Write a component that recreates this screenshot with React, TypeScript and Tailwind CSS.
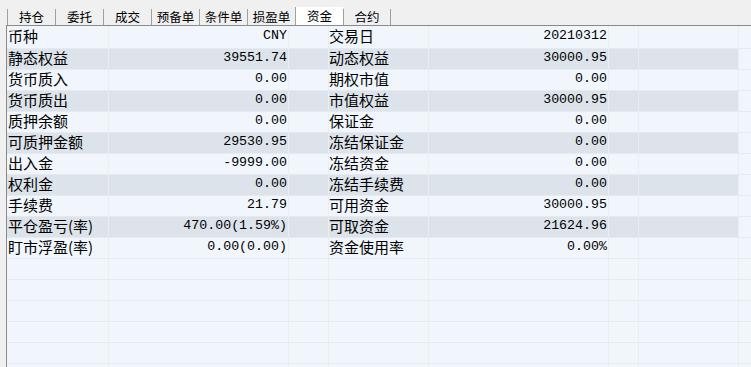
import React from "react";

const tabs = ["持仓", "委托", "成交", "预备单", "条件单", "损盈单", "资金", "合约"];

const rows: [string, string, string, string][] = [
  ["币种", "CNY", "交易日", "20210312"],
  ["静态权益", "39551.74", "动态权益", "30000.95"],
  ["货币质入", "0.00", "期权市值", "0.00"],
  ["货币质出", "0.00", "市值权益", "30000.95"],
  ["质押余额", "0.00", "保证金", "0.00"],
  ["可质押金额", "29530.95", "冻结保证金", "0.00"],
  ["出入金", "-9999.00", "冻结资金", "0.00"],
  ["权利金", "0.00", "冻结手续费", "0.00"],
  ["手续费", "21.79", "可用资金", "30000.95"],
  ["平仓盈亏(率)", "470.00(1.59%)", "可取资金", "21624.96"],
  ["盯市浮盈(率)", "0.00(0.00)", "资金使用率", "0.00%"],
  ["", "", "", ""],
  ["", "", "", ""],
  ["", "", "", ""],
  ["", "", "", ""],
  ["", "", "", ""],
  ["", "", "", ""],
];

const cjk = "font-['Noto_Sans_CJK_SC','Noto_Sans',sans-serif]";
const mono = "font-['Liberation_Mono','Noto_Sans_CJK_SC',monospace]";

export default function App() {
  return (
    <div className={`w-[751px] h-[367px] overflow-hidden bg-[#f0f0f0] ${cjk} text-black`}>
      {/* 标签栏 */}
      <div className="h-[25px] flex items-end pl-[7px]">
        {tabs.map((t) => {
          const active = t === "资金";
          return (
            <div
              key={t}
              className={`w-[48px] flex items-center justify-center text-[12.5px] leading-none border-l border-[#a0a0a0] last:border-r ${
                active ? "h-[18px] bg-white" : "h-[16px]"
              }`}
            >
              {t}
            </div>
          );
        })}
      </div>

      {/* 资金表格 */}
      <div className="ml-[6px] border-l border-t border-[#8a8a8a]">
        {rows.map((r, i) => {
          const dark = i % 2 === 1 && i < 11;
          const bg = dark ? "bg-[#dce3ea]" : "bg-[#f0f6fc]";
          return (
            <div
              key={i}
              className={`flex border-b border-[#e6e9ed] text-[15px] leading-none ${i === 0 ? "h-[23px]" : "h-[21px]"}`}
            >
              <div className={`w-[102px] shrink-0 flex items-center pl-[1px] pb-[4px] border-r border-[#eaeef2] ${bg}`}>
                {r[0]}
              </div>
              <div className={`w-[180px] shrink-0 flex items-center justify-end pr-[1px] pb-[3px] border-r border-[#eaeef2] ${mono} text-[13.3px] ${bg}`}>
                {r[1]}
              </div>
              <div className={`w-[40px] shrink-0 border-r border-[#eaeef2] ${bg}`} />
              <div className={`w-[100px] shrink-0 flex items-center pb-[4px] border-r border-[#eaeef2] ${bg}`}>
                {r[2]}
              </div>
              <div className={`w-[180px] shrink-0 flex items-center justify-end pr-[1px] pb-[3px] border-r border-[#eaeef2] ${mono} text-[13.3px] ${bg}`}>
                {r[3]}
              </div>
              <div className={`w-[30px] shrink-0 border-r border-[#eaeef2] ${bg}`} />
              <div className={`w-[100px] shrink-0 border-r border-[#eaeef2] ${bg}`} />
              <div className="flex-1 bg-[#f0f6fc]" />
            </div>
          );
        })}
      </div>
    </div>
  );
}
